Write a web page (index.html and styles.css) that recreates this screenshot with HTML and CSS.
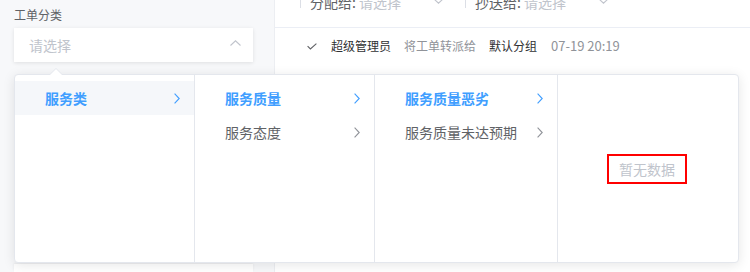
FILE: index.html
```html
<!DOCTYPE html>
<html lang="zh-CN">
<head>
<meta charset="utf-8">
<title>工单分类</title>
<link rel="stylesheet" href="styles.css">
</head>
<body>
<div class="page">
  <div class="left">
    <div class="label">工单分类</div>
    <div class="select">
      <span class="placeholder">请选择</span>
      <svg class="sel-arrow" width="11" height="6" viewBox="0 0 11 6"><polyline points="0.5,5.5 5.5,0.8 10.5,5.5" fill="none" stroke="#c0c4cc" stroke-width="1.1"/></svg>
    </div>
    <div class="card-below"></div>
  </div>
  <div class="right">
    <div class="top">
      <div class="top-inner">
        <div class="field">
          <span class="bar"></span>
          <span class="flabel">分配给:</span>
          <span class="fph">请选择</span>
          <svg class="fchev" width="11" height="6" viewBox="0 0 11 6"><polyline points="0.5,0.5 5.5,5.2 10.5,0.5" fill="none" stroke="#c0c4cc" stroke-width="1.1"/></svg>
        </div>
        <div class="field">
          <span class="bar"></span>
          <span class="flabel">抄送给:</span>
          <span class="fph">请选择</span>
          <svg class="fchev" width="11" height="6" viewBox="0 0 11 6"><polyline points="0.5,0.5 5.5,5.2 10.5,0.5" fill="none" stroke="#c0c4cc" stroke-width="1.1"/></svg>
        </div>
      </div>
    </div>
    <div class="log">
      <svg class="check" width="10" height="7" viewBox="0 0 10 7"><polyline points="0.6,3.2 3.4,6 9.4,0.6" fill="none" stroke="#606266" stroke-width="1.1"/></svg>
      <span class="dark">超级管理员</span>
      <span class="muted">将工单转派给</span>
      <span class="dark">默认分组</span>
      <span class="muted time">07-19 20:19</span>
    </div>
  </div>
</div>

<div class="cascader">
  <div class="menu m1">
    <div class="node active hover"><span>服务类</span><svg class="chev" width="6" height="11" viewBox="0 0 6 11"><polyline points="0.6,0.6 5.2,5.5 0.6,10.4" fill="none" stroke="currentColor" stroke-width="1.1"/></svg></div>
  </div>
  <div class="menu m2">
    <div class="node active"><span>服务质量</span><svg class="chev" width="6" height="11" viewBox="0 0 6 11"><polyline points="0.6,0.6 5.2,5.5 0.6,10.4" fill="none" stroke="currentColor" stroke-width="1.1"/></svg></div>
    <div class="node"><span>服务态度</span><svg class="chev" width="6" height="11" viewBox="0 0 6 11"><polyline points="0.6,0.6 5.2,5.5 0.6,10.4" fill="none" stroke="currentColor" stroke-width="1.1"/></svg></div>
  </div>
  <div class="menu m3">
    <div class="node active"><span>服务质量恶劣</span><svg class="chev" width="6" height="11" viewBox="0 0 6 11"><polyline points="0.6,0.6 5.2,5.5 0.6,10.4" fill="none" stroke="currentColor" stroke-width="1.1"/></svg></div>
    <div class="node"><span>服务质量未达预期</span><svg class="chev" width="6" height="11" viewBox="0 0 6 11"><polyline points="0.6,0.6 5.2,5.5 0.6,10.4" fill="none" stroke="currentColor" stroke-width="1.1"/></svg></div>
  </div>
  <div class="menu m4">
    <span class="empty">暂无数据</span>
  </div>
</div>
</body>
</html>
```

FILE: styles.css
```css
* { box-sizing: border-box; }
html, body {
  margin: 0;
  padding: 0;
}
body {
  width: 750px;
  height: 272px;
  overflow: hidden;
  background: #fff;
  font-family: "Noto Sans CJK SC", "Noto Sans", sans-serif;
  color: #606266;
  position: relative;
}
.page {
  display: flex;
  height: 272px;
  overflow: hidden;
}
.left {
  width: 275px;
  flex: none;
  background: #f7f8fa;
  padding: 7px 21px 0 14px;
  border-right: 1px solid #eceef2;
}
.label {
  font-size: 12px;
  line-height: 16px;
  color: #606266;
}
.select {
  margin-top: 5px;
  height: 34px;
  background: #fff;
  box-shadow: 0 1px 4px rgba(0, 0, 0, 0.1);
  display: flex;
  align-items: center;
  padding: 0 12px 0 15px;
}
.placeholder {
  font-size: 14px;
  color: #c0c4cc;
  flex: 1;
}
.sel-arrow { margin-top: -4px; }
.card-below {
  margin-top: 202px;
  height: 8px;
  background: #fff;
  box-shadow: 0 -1px 3px rgba(0, 0, 0, 0.06);
}
.right {
  flex: 1;
  display: flex;
  flex-direction: column;
}
.top {
  height: 28px;
  border-bottom: 1px solid #ebeef5;
  overflow: hidden;
}
.top-inner {
  margin-top: -8px;
  display: flex;
  padding-left: 25px;
  height: 20px;
  line-height: 20px;
  font-size: 14px;
}
.field {
  width: 165px;
  display: flex;
  align-items: flex-start;
  padding-right: 21px;
}
.bar {
  width: 1px;
  height: 16px;
  background: #dcdfe6;
  margin-right: 9px;
}
.flabel { color: #606266; }
.fph { color: #c0c4cc; margin-left: 3px; flex: 1; }
.fchev { margin-top: 6px; }
.log {
  display: flex;
  align-items: center;
  padding: 10px 0 0 32px;
  font-size: 12px;
  line-height: 16px;
}
.check { margin-right: 14px; }
.dark { color: #303133; margin-right: 13px; }
.muted { color: #909399; margin-right: 13px; }
.time { font-size: 13px; margin-left: 1px; }

.cascader {
  position: absolute;
  left: 14px;
  top: 74px;
  width: 725px;
  height: 189px;
  background: #fff;
  border: 1px solid #e4e7ed;
  border-radius: 4px;
  box-shadow: 0 2px 12px rgba(0, 0, 0, 0.1);
  display: flex;
}
.cascader::before {
  content: "";
  position: absolute;
  top: -7px;
  left: 34px;
  border-left: 7px solid transparent;
  border-right: 7px solid transparent;
  border-bottom: 7px solid #e4e7ed;
}
.cascader::after {
  content: "";
  position: absolute;
  top: -6px;
  left: 35px;
  border-left: 6px solid transparent;
  border-right: 6px solid transparent;
  border-bottom: 6px solid #fff;
}
.menu {
  height: 100%;
  border-right: 1px solid #e4e7ed;
  padding-top: 6px;
}
.m1 { width: 180px; }
.m2 { width: 180px; }
.m3 { width: 183px; }
.m4 {
  width: 180px;
  border-right: none;
  padding-top: 0;
  display: flex;
  align-items: center;
  justify-content: center;
}
.node {
  height: 34px;
  display: flex;
  align-items: center;
  justify-content: space-between;
  padding: 0 14px 0 30px;
  font-size: 14px;
  color: #606266;
}
.node.active {
  color: #409eff;
  font-weight: 700;
}
.node.hover { background: #f5f7fa; }
.chev { color: #909399; }
.node.active .chev { color: #409eff; }
.empty {
  font-size: 14px;
  line-height: 20px;
  color: #c0c4cc;
  border: 2px solid #ff0000;
  padding: 3px 10px;
  margin-left: -2px;
  margin-top: 1px;
}
```
